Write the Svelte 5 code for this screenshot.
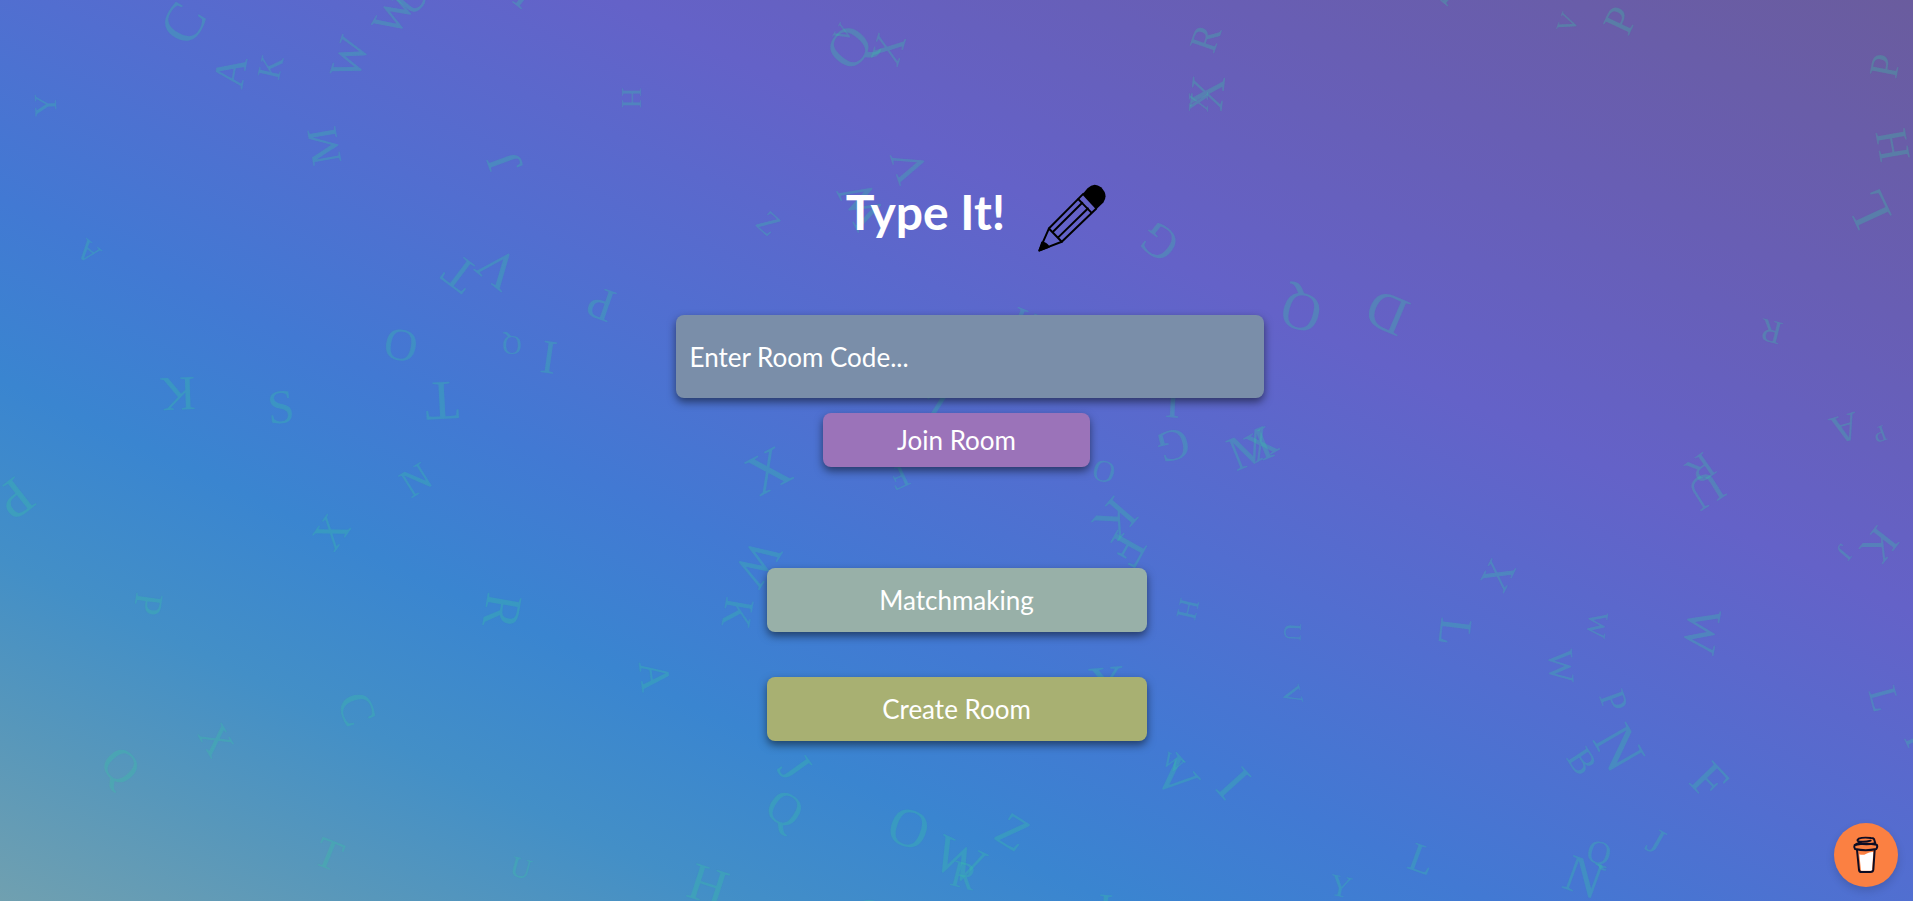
<script>
  let roomCode = $state('');

  // Drifting letters: character, centre x, centre y, font size, rotation
  const field = { width: 1913, height: 901 };
  const letters = [
    ['C', 183, 23, 56, -60], ['A', 231, 72, 44, -80], ['K', 271, 67, 33, -77],
    ['W', 350, 58, 44, -72], ['W', 394, 14, 44, -60], ['U', 411, -2, 42, -50],
    ['I', 526, -6, 46, 38], ['H', 631, 98, 29, 90], ['Y', 45, 105, 32, -92],
    ['M', 324, 146, 43, -100], ['J', 504, 163, 50, -110], ['A', 88, 252, 30, -141],
    ['T', 460, 274, 48, -143], ['V', 498, 268, 52, -141], ['P', 601, 304, 47, -161],
    ['Q', 849, 47, 55, -50], ['V', 843, 33, 24, -60], ['X', 888, 49, 43, -73],
    ['R', 1205, 38, 39, -71], ['X', 1207, 93, 49, -84], ['X', 1198, 102, 29, -90],
    ['V', 909, 166, 46, -108], ['W', 861, 205, 50, -118], ['Z', 769, 223, 32, 43],
    ['G', 1159, 242, 48, -142], ['I', 1452, -7, 40, 40], ['V', 1568, 23, 27, -70],
    ['P', 1620, 20, 43, -65], ['P', 1885, 66, 41, -79], ['H', 1893, 145, 45, -100],
    ['L', 1868, 209, 56, -115], ['Q', 1301, 312, 55, -164], ['D', 1387, 313, 55, -157],
    ['R', 1771, 331, 33, -166], ['A', 1845, 428, 40, 164], ['P', 1880, 434, 23, 160],
    ['R', 1701, 469, 38, 145], ['U', 1706, 490, 46, 148], ['J', 1844, 552, 26, 130],
    ['K', 1879, 545, 44, 128], ['X', 1498, 575, 41, -63], ['O', 401, 345, 46, 10],
    ['Q', 512, 344, 27, 180], ['I', 549, 357, 48, 8], ['K', 178, 394, 49, 178],
    ['S', 281, 407, 48, -5], ['T', 442, 401, 56, 177], ['N', 416, 480, 40, -32],
    ['X', 331, 532, 43, -55], ['P', 15, 499, 55, 142], ['P', 148, 604, 40, 98],
    ['R', 502, 611, 52, 100], ['C', 357, 709, 48, 70], ['X', 216, 740, 41, 60],
    ['Q', 121, 766, 47, 48], ['T', 329, 854, 43, 22], ['U', 521, 868, 29, 15],
    ['H', 1026, 326, 44, 22], ['Z', 938, 408, 46, 0], ['I', 1173, 402, 47, 3],
    ['G', 1173, 445, 45, 166], ['M', 1250, 448, 49, -22], ['X', 1261, 444, 42, -30],
    ['O', 1104, 471, 31, 15], ['X', 768, 470, 57, -28], ['F', 899, 477, 33, 155],
    ['K', 1115, 519, 51, 131], ['F', 1126, 549, 52, 119], ['W', 758, 563, 48, 122],
    ['K', 738, 613, 42, 100], ['A', 655, 676, 43, 83], ['H', 1188, 609, 29, 103],
    ['X', 1107, 685, 56, -5], ['J', 795, 767, 49, 54], ['Q', 785, 809, 47, 33],
    ['O', 909, 828, 55, 20], ['Z', 1013, 832, 48, 32], ['W', 959, 860, 53, 25],
    ['R', 964, 875, 38, 14], ['H', 708, 885, 53, 18], ['O', 869, 915, 44, 0],
    ['I', 1105, 910, 46, 5], ['V', 1176, 777, 53, 48], ['W', 1173, 763, 22, 30],
    ['I', 1234, 783, 55, 48], ['U', 1293, 632, 25, 92], ['V', 1292, 695, 27, 75],
    ['L', 1455, 632, 46, 97], ['W', 1597, 625, 28, 98], ['W', 1561, 666, 36, 87],
    ['W', 1702, 631, 48, 100], ['P', 1614, 701, 37, 70], ['N', 1619, 748, 59, 60],
    ['B', 1582, 761, 36, 57], ['F', 1709, 781, 51, 46], ['L', 1884, 699, 40, 75],
    ['I', 1918, 738, 40, 65], ['J', 1656, 841, 37, 30], ['Q', 1599, 853, 33, 15],
    ['N', 1584, 877, 53, 20], ['L', 1422, 859, 41, 20], ['Y', 1341, 886, 31, 12]
  ].map(([char, x, y, size, turn]) => ({
    char,
    style: `left:${(x / field.width) * 100}%;top:${(y / field.height) * 100}%;font-size:${size}px;transform:translate(-50%,-50%) rotate(${turn}deg)`
  }));
</script>

<div class="page">
  <div class="letters" aria-hidden="true">
    {#each letters as letter}
      <span style={letter.style}>{letter.char}</span>
    {/each}
  </div>

  <main>
    <header>
      <h1>Type It!</h1>
      <svg class="pencil" viewBox="650 68 212 212" aria-hidden="true">
        <g fill="none" stroke="#000" stroke-width="6" stroke-linejoin="round" stroke-linecap="round">
          <path d="M686 206 L790 101 M725 246 L829 146" />
          <path d="M657 272 L686 206 L725 246 Z" />
          <path d="M775 117 L814 157" />
          <path d="M700 214 L787 128 M715 232 L804 145" />
        </g>
        <path d="M787 103 L803 84 Q823 64 844 81 Q867 104 851 127 L829 148 Z" />
        <path d="M657 273 L665 248 Q678 249 686 262 Z" stroke="#000" stroke-width="5" stroke-linejoin="round" />
      </svg>
    </header>

    <form onsubmit={(e) => e.preventDefault()}>
      <input type="text" aria-label="Room code" placeholder="Enter Room Code..." bind:value={roomCode} />
      <button class="join" type="submit">Join Room</button>
    </form>

    <div class="actions">
      <button class="match" type="button">Matchmaking</button>
      <button class="create" type="button">Create Room</button>
    </div>
  </main>

  <button class="coffee" type="button" aria-label="Support">
    <svg viewBox="63 66 192 192" aria-hidden="true">
      <path d="M139 160 Q150 164 160 158 Q170 152 181 153 L177 209 L144 209 Z" fill="#fff" />
      <g fill="none" stroke="#0d0c23" stroke-width="6" stroke-linecap="round" stroke-linejoin="round">
        <path d="M132 147 L138 207 Q139 213 146 213 L173 213 Q180 213 181 206 L185 147" />
        <path d="M125 132 Q122 138 126 144 Q158 151 190 144 Q195 137 191 131 Q158 125 125 132 Z" />
        <path d="M128 131 Q130 128 136 127 Q160 133 187 127 L183 114 Q181 111 174 111 Q150 108 137 113 Q128 120 141 122 Q157 124 173 119" />
      </g>
    </svg>
  </button>
</div>

<style>
  :global(body) {
    margin: 0;
  }

  .page {
    position: relative;
    min-height: 100vh;
    overflow: hidden;
    font-family: Lato, 'Open Sans', sans-serif;
    background: linear-gradient(
      to top right,
      #70a0b0 0%,
      #5797bb 10%,
      #438fc7 19%,
      #3a85d0 29%,
      #4279d3 39%,
      #526ed0 51%,
      #6462c8 66%,
      #685eb4 82%,
      #6a5c9e 100%
    );
  }

  .letters {
    position: absolute;
    inset: 0;
    font-family: 'Liberation Serif', serif;
    line-height: 1;
    color: rgba(55, 200, 165, 0.22);
    text-shadow: 0 0 1px rgba(55, 200, 165, 0.12);
    user-select: none;
  }

  .letters span {
    position: absolute;
  }

  main {
    position: relative;
    display: flex;
    flex-direction: column;
    align-items: center;
    padding-top: 168px;
  }

  header {
    display: flex;
    align-items: center;
    gap: 32px;
    height: 100px;
    padding-left: 40px;
  }

  h1 {
    margin: 0 0 12px;
    font-size: 48px;
    line-height: 64px;
    font-weight: 700;
    color: #fff;
  }

  .pencil {
    width: 70px;
    height: 70px;
  }

  form {
    display: flex;
    flex-direction: column;
    align-items: center;
    gap: 15px;
    width: 100%;
    margin-top: 47px;
  }

  input,
  button {
    box-sizing: border-box;
    border: 0;
    border-radius: 8px;
    font: inherit;
    font-size: 26px;
    line-height: 32px;
    color: #fff;
    box-shadow: 0 4px 8px rgba(0, 0, 0, 0.5);
  }

  button {
    padding: 0;
    cursor: pointer;
  }

  input {
    width: 588px;
    max-width: 90%;
    height: 83px;
    margin-left: 26px;
    padding: 0 14px;
    background: #7a8ea9;
  }

  input::placeholder {
    color: #fff;
    opacity: 1;
  }

  .join {
    width: 14%;
    min-width: 180px;
    height: 54px;
    background: #9b73b9;
  }

  .actions {
    display: flex;
    flex-direction: column;
    align-items: center;
    gap: 45px;
    width: 100%;
    margin-top: 101px;
  }

  .actions button {
    width: 380px;
    max-width: 90%;
    height: 64px;
  }

  .actions .match {
    background: #98b0a8;
  }

  .actions .create {
    background: #a8b072;
  }

  .coffee {
    position: absolute;
    right: 15px;
    bottom: 14px;
    width: 64px;
    height: 64px;
    border-radius: 50%;
    background: #fb8042;
    box-shadow: 0 4px 8px rgba(0, 0, 0, 0.15);
  }

  .coffee svg {
    display: block;
    width: 64px;
    height: 64px;
  }
</style>
